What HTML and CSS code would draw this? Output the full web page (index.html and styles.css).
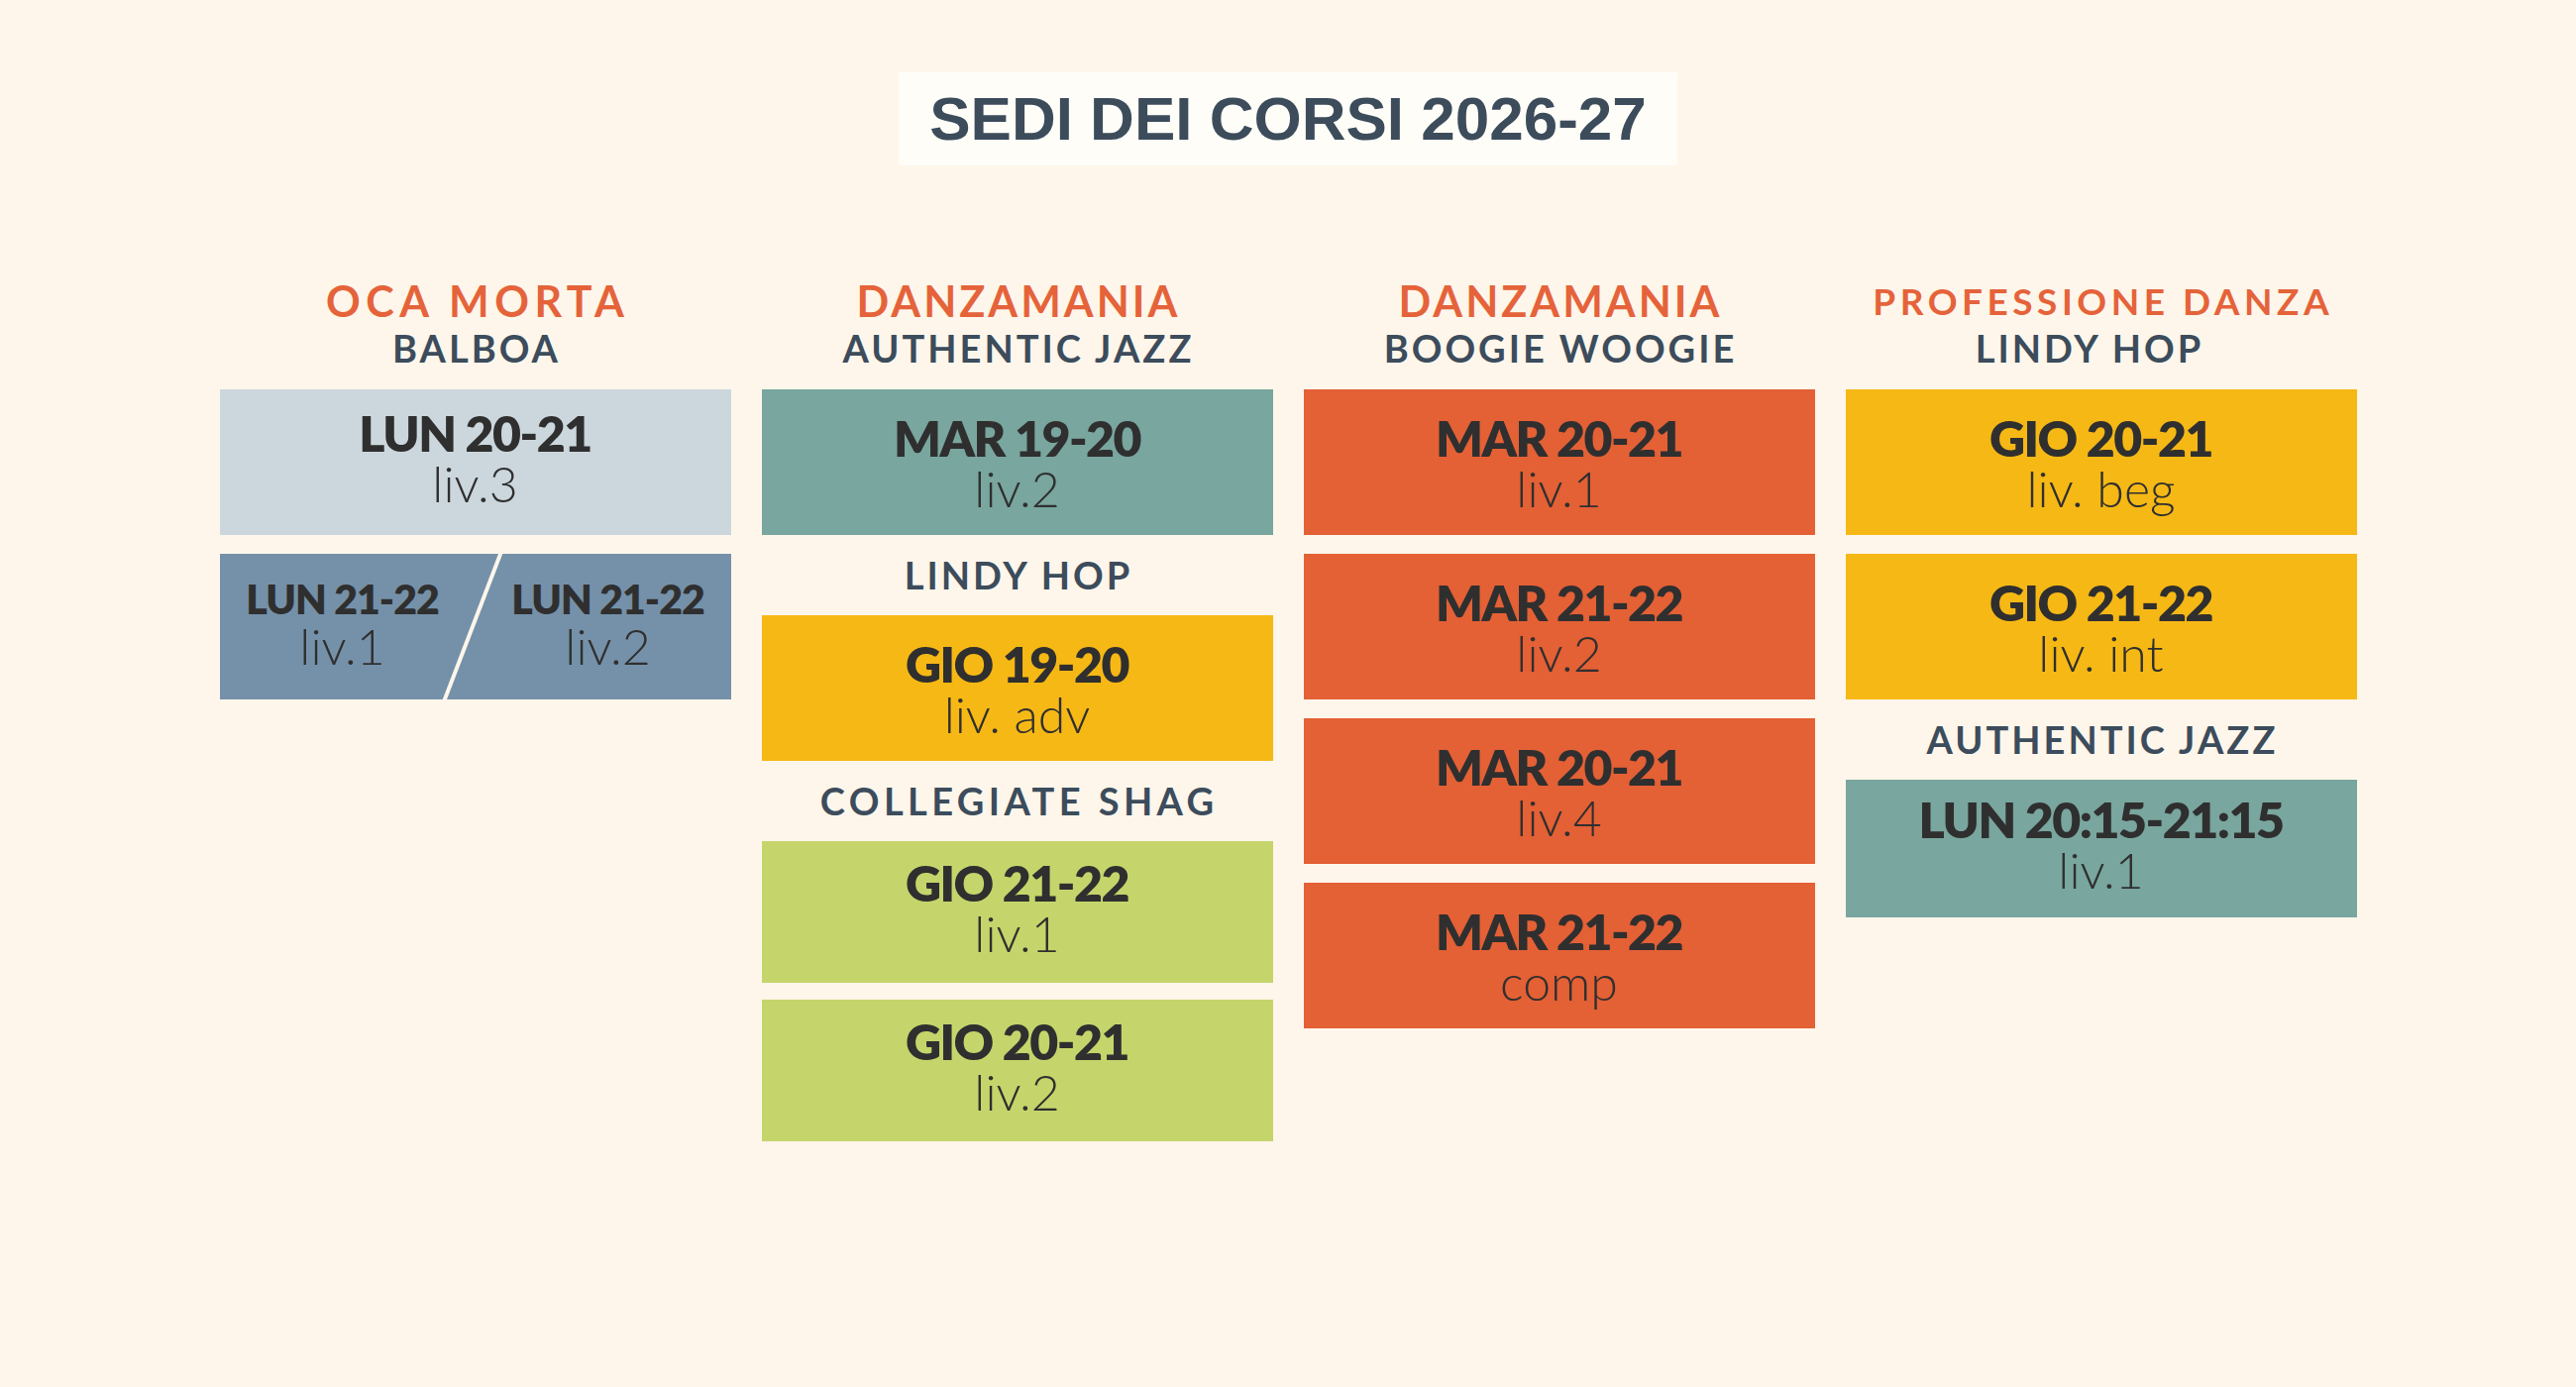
FILE: index.html
```html
<!DOCTYPE html>
<html lang="it">
<head>
<meta charset="utf-8">
<title>Sedi dei corsi 2026-27</title>
<link rel="stylesheet" href="styles.css">
</head>
<body>
<main class="page">
  <header class="title-wrap">
    <h1 class="title">SEDI DEI CORSI 2026-27</h1>
  </header>

  <section class="columns">
    <div class="col">
      <div class="head">
        <div class="venue wide">OCA MORTA</div>
        <div class="style">BALBOA</div>
      </div>
      <div class="box raised c-pale">
        <div class="when">LUN 20-21</div>
        <div class="lvl">liv.3</div>
      </div>
      <div class="box split c-steel">
        <div class="half left">
          <div class="when sm">LUN 21-22</div>
          <div class="lvl">liv.1</div>
        </div>
        <div class="half right">
          <div class="when sm">LUN 21-22</div>
          <div class="lvl">liv.2</div>
        </div>
        <svg class="slash" viewBox="0 0 518 148" preserveAspectRatio="none" aria-hidden="true">
          <line x1="285" y1="-2" x2="227" y2="150" stroke="#fef6ea" stroke-width="4"/>
        </svg>
      </div>
    </div>

    <div class="col">
      <div class="head">
        <div class="venue">DANZAMANIA</div>
        <div class="style">AUTHENTIC JAZZ</div>
      </div>
      <div class="box c-teal">
        <div class="when">MAR 19-20</div>
        <div class="lvl">liv.2</div>
      </div>
      <div class="label">LINDY HOP</div>
      <div class="box c-yellow">
        <div class="when">GIO 19-20</div>
        <div class="lvl">liv. adv</div>
      </div>
      <div class="label spaced">COLLEGIATE SHAG</div>
      <div class="box short raised c-lime">
        <div class="when">GIO 21-22</div>
        <div class="lvl">liv.1</div>
      </div>
      <div class="box short raised c-lime">
        <div class="when">GIO 20-21</div>
        <div class="lvl">liv.2</div>
      </div>
    </div>

    <div class="col">
      <div class="head">
        <div class="venue">DANZAMANIA</div>
        <div class="style">BOOGIE WOOGIE</div>
      </div>
      <div class="box c-orange">
        <div class="when">MAR 20-21</div>
        <div class="lvl">liv.1</div>
      </div>
      <div class="box c-orange">
        <div class="when">MAR 21-22</div>
        <div class="lvl">liv.2</div>
      </div>
      <div class="box c-orange">
        <div class="when">MAR 20-21</div>
        <div class="lvl">liv.4</div>
      </div>
      <div class="box c-orange">
        <div class="when">MAR 21-22</div>
        <div class="lvl">comp</div>
      </div>
    </div>

    <div class="col">
      <div class="head">
        <div class="venue long">PROFESSIONE DANZA</div>
        <div class="style nudge">LINDY HOP</div>
      </div>
      <div class="box c-yellow">
        <div class="when">GIO 20-21</div>
        <div class="lvl">liv. beg</div>
      </div>
      <div class="box c-yellow">
        <div class="when">GIO 21-22</div>
        <div class="lvl">liv. int</div>
      </div>
      <div class="label">AUTHENTIC JAZZ</div>
      <div class="box shorter raised c-teal">
        <div class="when">LUN 20:15-21:15</div>
        <div class="lvl">liv.1</div>
      </div>
    </div>
  </section>
</main>
</body>
</html>
```

FILE: styles.css
```css
* { box-sizing: border-box; }

body {
  margin: 0;
  background: #fef6ea;
  font-family: "Lato", "Open Sans", sans-serif;
}

.page {
  width: 2600px;
  height: 1400px;
}

.title-wrap {
  display: flex;
  justify-content: center;
  padding-top: 73px;
}

.title {
  margin: 0;
  height: 94px;
  padding: 0 31px;
  background: #fffdf8;
  font-family: "Liberation Sans", Arial, sans-serif;
  font-weight: 700;
  font-size: 62px;
  line-height: 94px;
  color: #3c4c5b;
}

.columns {
  display: grid;
  grid-template-columns: repeat(4, 516px);
  column-gap: 31px;
  justify-content: center;
  align-items: start;
  margin-top: 113px;
}

.col {
  display: flex;
  flex-direction: column;
}

.head {
  margin-bottom: 22px;
  text-align: center;
}

.venue {
  font-weight: 700;
  font-size: 43px;
  line-height: 48px;
  letter-spacing: 3px;
  padding-left: 3px;
  color: #e5633a;
}

.venue.wide {
  letter-spacing: 5.5px;
  padding-left: 5.5px;
}

.venue.long {
  font-size: 37px;
  letter-spacing: 4.5px;
  padding-left: 4.5px;
}

.style,
.label {
  font-weight: 700;
  font-size: 38px;
  line-height: 40px;
  letter-spacing: 3px;
  padding-left: 3px;
  color: #3c4c5c;
  text-align: center;
}

.style {
  margin-top: 3px;
}

.style.nudge {
  padding-right: 26px;
}

.label {
  margin: 20px 0 21px;
}

.label.spaced {
  letter-spacing: 4.4px;
  padding-left: 4.4px;
}

.box {
  height: 147px;
  display: flex;
  flex-direction: column;
  justify-content: center;
  align-items: center;
  color: #2f2f2f;
  text-align: center;
}

.box + .box {
  margin-top: 19px;
}

.box.raised { padding-bottom: 10px; }
.box.short { height: 143px; }
.box.short + .box.short { margin-top: 17px; }
.box.shorter { height: 139px; }

.when {
  font-weight: 800;
  font-size: 50px;
  line-height: 52px;
  letter-spacing: -1.5px;
}

.when.sm {
  font-size: 41px;
  line-height: 44px;
  letter-spacing: -1px;
}

.lvl {
  font-weight: 300;
  font-size: 50px;
  line-height: 50px;
}

.split {
  position: relative;
  flex-direction: row;
  align-items: stretch;
  padding-bottom: 6px;
}

.half {
  flex: 1;
  display: flex;
  flex-direction: column;
  justify-content: center;
  align-items: center;
}

.half.left { padding-right: 10px; }
.half.right { padding-left: 10px; }

.slash {
  position: absolute;
  inset: 0;
  width: 100%;
  height: 100%;
}

.c-pale   { background: #ccd7dd; }
.c-steel  { background: #7591a9; }
.c-teal   { background: #79a69e; }
.c-yellow { background: #f6b815; }
.c-lime   { background: #c5d56b; }
.c-orange { background: #e46035; }
```
